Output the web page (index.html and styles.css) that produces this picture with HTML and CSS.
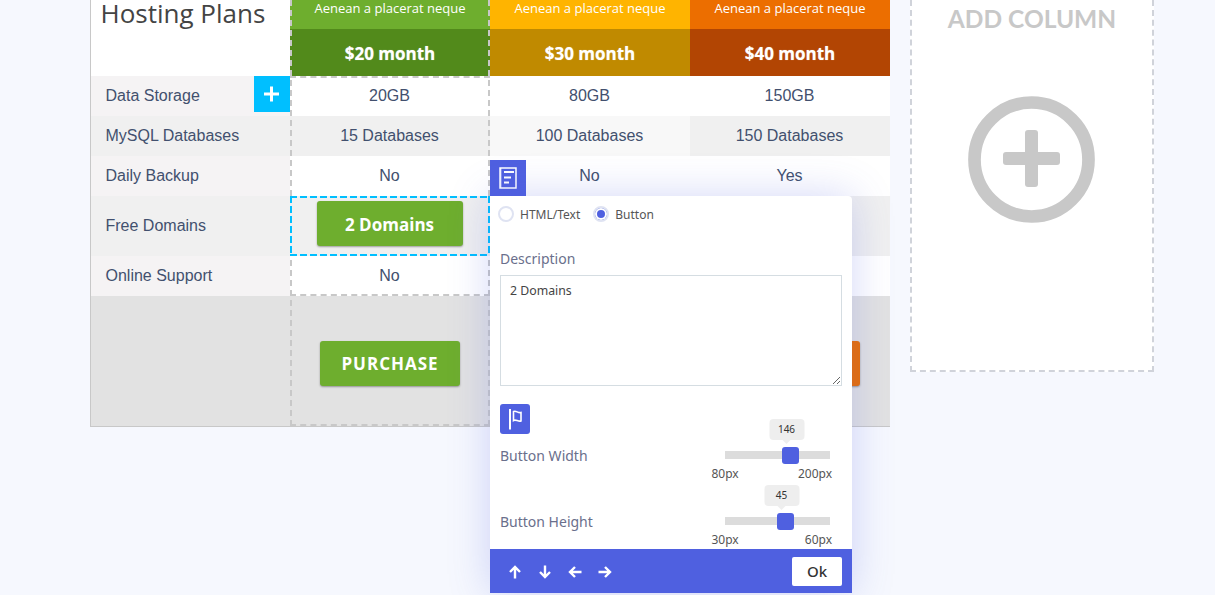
FILE: index.html
```html
<!DOCTYPE html>
<html lang="en">
<head>
  <meta charset="UTF-8">
  <title>Hosting Plans</title>
  <link rel="stylesheet" href="styles.css">
</head>
<body>
  <div class="page">
    <div class="plans">
      <div class="col col-labels">
        <div class="title">Hosting Plans</div>
        <div class="label row-a">Data Storage
          <span class="add-row"><svg width="16" height="16" viewBox="0 0 16 16"><path d="M7.500 .5v15M0 8h15" stroke="#fff" stroke-width="3" fill="none"/></svg></span>
        </div>
        <div class="label row-b">MySQL Databases</div>
        <div class="label row-a">Daily Backup</div>
        <div class="label row-b row-tall">Free Domains</div>
        <div class="label row-a">Online Support</div>
        <div class="foot"></div>
      </div>

      <div class="col col-active">
        <div class="feature green">Aenean a placerat neque</div>
        <div class="price green-dark">$20 month</div>
        <div class="cell">20GB</div>
        <div class="cell alt">15 Databases</div>
        <div class="cell">No</div>
        <div class="cell alt row-tall selected"><span class="domains-btn">2 Domains</span></div>
        <div class="cell">No</div>
        <div class="foot"><span class="buy green">PURCHASE</span></div>
      </div>

      <div class="col">
        <div class="feature amber">Aenean a placerat neque</div>
        <div class="price amber-dark">$30 month</div>
        <div class="cell">80GB</div>
        <div class="cell alt-light">100 Databases</div>
        <div class="cell">No</div>
        <div class="cell alt-light row-tall"></div>
        <div class="cell">No</div>
        <div class="foot"><span class="buy amber">PURCHASE</span></div>
      </div>

      <div class="col">
        <div class="feature orange">Aenean a placerat neque</div>
        <div class="price orange-dark">$40 month</div>
        <div class="cell">150GB</div>
        <div class="cell alt">150 Databases</div>
        <div class="cell">Yes</div>
        <div class="cell alt row-tall"></div>
        <div class="cell">No</div>
        <div class="foot"><span class="buy orange">PURCHASE</span></div>
      </div>
    </div>

    <div class="add-column">
      <div class="add-title">ADD COLUMN</div>
      <svg class="add-icon" width="127" height="127" viewBox="0 0 127 127" fill="#c8c8c8">
        <circle cx="63.500" cy="63.500" r="57" fill="none" stroke="#c8c8c8" stroke-width="12.700"/>
        <rect x="57" y="34" width="13" height="57" rx="3"/>
        <rect x="35" y="56" width="57" height="13" rx="3"/>
      </svg>
    </div>
  </div>

  <div class="tab-doc">
    <svg width="18" height="22" viewBox="0 0 18 22" fill="none" stroke="#fff"><path d="M1 1h16v20H1z" stroke-width="1.500"/><path d="M1.800 1v20" stroke-width="1"/><path d="M5 5h10M5 10.500h7M5 15.500h5" stroke-width="2"/></svg>
  </div>

  <div class="editor">
    <div class="editor-body">
      <div class="radios">
        <label class="radio"><span class="dot"></span>HTML/Text</label>
        <label class="radio"><span class="dot on"></span>Button</label>
      </div>
      <div class="field-label">Description</div>
      <textarea class="desc">2 Domains</textarea>
      <div class="flag-btn">
        <svg width="30" height="30" viewBox="0 0 30 30" fill="none" stroke="#fff"><path d="M10 5v20.500" stroke-width="2"/><path d="M13.500 7.500C16 6 18 9.500 21 8.500V17C18 18 16 15 13.500 16.500z" stroke-width="1.600"/></svg>
      </div>
      <div class="slider-row">
        <div class="slider-name">Button Width</div>
        <div class="slider">
          <div class="track">
            <div class="thumb thumb-w"><span class="bubble">146</span></div>
          </div>
          <div class="range"><span>80px</span><span>200px</span></div>
        </div>
      </div>
      <div class="slider-row">
        <div class="slider-name">Button Height</div>
        <div class="slider">
          <div class="track">
            <div class="thumb thumb-h"><span class="bubble">45</span></div>
          </div>
          <div class="range"><span>30px</span><span>60px</span></div>
        </div>
      </div>
    </div>
    <div class="editor-foot">
      <div class="arrows">
        <svg width="14" height="14" viewBox="0 0 14 14"><path d="M7 13.500V2M2 7l5-5 5 5"/></svg>
        <svg width="14" height="14" viewBox="0 0 14 14"><path d="M7 .5V12M2 7l5 5 5-5"/></svg>
        <svg width="14" height="14" viewBox="0 0 14 14"><path d="M13.500 7H2M7 2L2 7l5 5"/></svg>
        <svg width="14" height="14" viewBox="0 0 14 14"><path d="M.5 7H12M7 2l5 5-5 5"/></svg>
      </div>
      <span class="ok">Ok</span>
    </div>
  </div>
</body>
</html>
```

FILE: styles.css
```css
html, body {
  margin: 0;
  height: 595px;
  overflow: hidden;
}
body {
  background: #f6f8fe;
  font-family: "Liberation Sans", Arial, sans-serif;
  color: #42506e;
  position: relative;
}
.page {
  display: flex;
  align-items: flex-start;
  padding-left: 90px;
  gap: 20px;
}
.plans {
  display: flex;
  width: 800px;
  border-bottom: 1px solid #c8c8c8;
}
.col {
  width: 200px;
  flex: none;
  box-sizing: border-box;
}
.col-labels {
  border-left: 1px solid #c8c8c8;
}
.col-active {
  position: relative;
}
.col-active::after {
  content: "";
  position: absolute;
  inset: 0;
  border: 2px dashed #c8c8c8;
  border-width: 0 2px 2px;
  pointer-events: none;
}
.col-active .price + .cell {
  border-top: 2px dashed #c8c8c8;
  line-height: 36px;
}
.col-active .selected + .cell {
  border-bottom: 2px dashed #c8c8c8;
}
.title {
  height: 76px;
  box-sizing: border-box;
  padding-left: 9.500px;
  background: #fff;
  font-family: "Open Sans", sans-serif;
  font-size: 26px;
  line-height: 26px;
  color: #444;
}
.feature {
  height: 29px;
  text-align: center;
  font-family: "Open Sans", sans-serif;
  font-size: 13px;
  line-height: 17px;
  color: #fff;
}
.price {
  height: 47px;
  text-align: center;
  font-family: "Open Sans", sans-serif;
  font-weight: 700;
  font-size: 17px;
  line-height: 49px;
  color: #fff;
  text-shadow: 0 0 1px rgba(255, 255, 255, .5);
}
.green { background: #6eae2e; }
.green-dark { background: #528a1b; }
.amber { background: #ffb400; }
.amber-dark { background: #c08a00; }
.orange { background: #ec6e00; }
.orange-dark { background: #b24503; }
.label, .cell {
  height: 40px;
  line-height: 40px;
  font-size: 16px;
  box-sizing: border-box;
}
.label {
  padding-left: 14.500px;
  position: relative;
}
.cell {
  text-align: center;
  background: #fff;
  padding-right: 1px;
}
.row-a { background: #f5f3f4; }
.row-b { background: #f0f0f0; }
.alt { background: #f0f0f0; }
.alt-light { background: #f8f8f8; }
.row-tall {
  height: 60px;
  line-height: 60px;
}
.add-row {
  position: absolute;
  right: 0;
  top: 0;
  width: 36px;
  height: 36px;
  background: #00bfff;
  display: flex;
  align-items: center;
  justify-content: center;
}
.selected {
  position: relative;
  display: flex;
  justify-content: center;
  padding-top: 5px;
}
.selected::after {
  content: "";
  position: absolute;
  inset: 0;
  z-index: 1;
  background:
    repeating-linear-gradient(90deg, #00bfff 0 7px, transparent 7px 10px) top / 100% 2px no-repeat,
    repeating-linear-gradient(90deg, #00bfff 0 7px, transparent 7px 10px) bottom / 100% 2px no-repeat,
    repeating-linear-gradient(0deg, #f0f0f0 0 3px, #00bfff 3px 10px) left / 2px 100% no-repeat,
    repeating-linear-gradient(0deg, #f0f0f0 0 3px, #00bfff 3px 10px) right / 2px 100% no-repeat;
}
.domains-btn {
  width: 146px;
  height: 45px;
  line-height: 47px;
  background: #6eae2e;
  border-radius: 3px;
  box-shadow: 0 1px 2px rgba(0, 0, 0, .35);
  font-family: "Open Sans", sans-serif;
  font-weight: 700;
  font-size: 17px;
  color: #fff;
}
.foot {
  height: 130px;
  box-sizing: border-box;
  padding-top: 5px;
  background: #e2e2e2;
  display: flex;
  align-items: center;
  justify-content: center;
}
.buy {
  width: 140px;
  height: 45px;
  line-height: 45px;
  text-align: center;
  border-radius: 3px;
  box-shadow: 0 1px 2px rgba(0, 0, 0, .35);
  font-family: "Open Sans", sans-serif;
  font-weight: 700;
  font-size: 17px;
  letter-spacing: 1px;
  color: #fff;
}
.add-column {
  width: 244px;
  height: 372px;
  box-sizing: border-box;
  background: #fff;
  border: 2px dashed #d0d3da;
  border-top: 0;
  text-align: center;
}
.add-title {
  font-family: Lato, sans-serif;
  font-weight: 700;
  font-size: 24.500px;
  line-height: 38px;
  color: #c8c8c8;
  height: 96px;
}
.add-icon {
  display: block;
  margin-left: 56px;
}
.tab-doc {
  position: absolute;
  left: 490px;
  top: 160px;
  width: 36px;
  height: 36px;
  background: #4f60e0;
  display: flex;
  align-items: center;
  justify-content: center;
}
.editor {
  position: absolute;
  z-index: 2;
  left: 490px;
  top: 196px;
  width: 362px;
  height: 397px;
  background: #fff;
  border-radius: 0 4px 0 0;
  box-shadow: 0 0 40px rgba(79, 96, 224, .25);
  display: flex;
  flex-direction: column;
  font-family: "Noto Sans", sans-serif;
}
.editor-body {
  flex: 1;
  min-height: 0;
  overflow: hidden;
  padding: 0 10px;
}
.radios {
  display: flex;
  gap: 13px;
  height: 36px;
  align-items: center;
}
.radio {
  display: flex;
  align-items: center;
  gap: 6px;
  font-size: 12px;
  color: #555;
}
.radio:first-child {
  margin-left: -2px;
}
.dot {
  width: 12px;
  height: 12px;
  border: 2px solid #dfe3f2;
  border-radius: 50%;
  box-sizing: content-box;
}
.dot.on {
  background: #4f60e0;
  box-shadow: inset 0 0 0 2px #fff;
}
.field-label {
  margin-top: 17px;
  font-size: 14px;
  line-height: 20px;
  color: #6a6f8c;
}
.desc {
  display: block;
  margin-top: 6px;
  width: 342px;
  height: 111px;
  box-sizing: border-box;
  padding: 6px 9px;
  border: 1px solid #d5dde2;
  font-family: "Noto Sans", sans-serif;
  font-size: 12.300px;
  color: #444;
  outline: none;
}
.flag-btn {
  margin-top: 18px;
  width: 30px;
  height: 30px;
  background: #4f60e0;
  border-radius: 3px;
}
.flag-btn svg {
  display: block;
}
.slider-row {
  display: flex;
  justify-content: space-between;
  height: 66px;
}
.slider-name {
  font-size: 14px;
  line-height: 20px;
  padding-top: 12px;
  color: #6a6f8c;
}
.slider {
  width: 105px;
  margin-right: 12px;
  padding-top: 17px;
}
.track {
  height: 8px;
  background: #dcdcdc;
  position: relative;
}
.thumb {
  position: absolute;
  top: -4px;
  width: 17px;
  height: 17px;
  background: #4f60e0;
  border-radius: 3px;
}
.thumb-w { left: 57px; }
.thumb-h { left: 52px; }
.bubble {
  position: absolute;
  left: calc(50% - 4px);
  bottom: 24px;
  transform: translateX(-50%);
  width: 35px;
  height: 21px;
  line-height: 20px;
  background: #eee;
  border-radius: 4px;
  text-align: center;
  font-size: 10px;
  color: #333;
}
.bubble::after {
  content: "";
  position: absolute;
  left: 50%;
  top: 100%;
  margin-left: -4px;
  border: 4px solid transparent;
  border-top-color: #eee;
  border-bottom: 0;
}
.range {
  display: flex;
  justify-content: space-between;
  margin: 7px -2px 0 -13.500px;
  font-size: 12px;
  line-height: 16px;
  color: #555;
}
.editor-foot {
  flex: none;
  height: 44px;
  background: #4f60e0;
  display: flex;
  align-items: center;
  justify-content: space-between;
  padding: 1px 10px 0 17.500px;
  box-sizing: border-box;
}
.arrows {
  display: flex;
  gap: 16px;
}
.arrows svg {
  fill: none;
  stroke: #fff;
  stroke-width: 2.400;
}
.ok {
  width: 50px;
  height: 29px;
  line-height: 29px;
  margin-top: -1px;
  background: #fff;
  border-radius: 2px;
  text-align: center;
  font-size: 15px;
  font-weight: 500;
  color: #333;
}
```
